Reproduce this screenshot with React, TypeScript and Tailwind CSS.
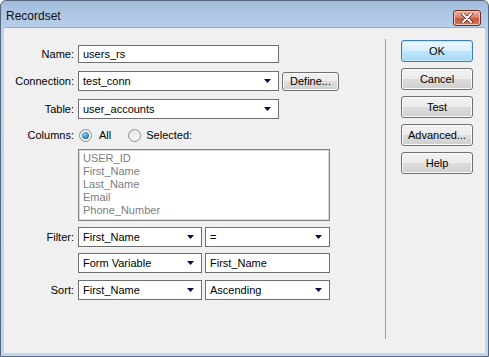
import React from "react";

const btn =
  "flex items-center justify-center rounded-[3px] border border-[#707070] bg-[linear-gradient(#f2f2f2_0%,#ebebeb_50%,#dddddd_50%,#cfcfcf_100%)] shadow-[inset_0_0_0_1px_#fcfcfc]";

function Arrow() {
  return (
    <svg width="7" height="4" viewBox="0 0 7 4" className="shrink-0">
      <polygon points="0,0 7,0 3.5,4" fill="#0b0b4a" />
    </svg>
  );
}

function Select({ value, w }: { value: string; w: string }) {
  return (
    <div
      className={`${w} flex h-[20px] items-center justify-between border border-[#6f6f6f] bg-white pl-[4px] pr-[7px]`}
    >
      <span>{value}</span>
      <Arrow />
    </div>
  );
}

function Field({ value, w }: { value: string; w: string }) {
  return (
    <div className={`${w} flex items-center border border-[#6f6f6f] bg-white pl-[4px]`}>
      {value}
    </div>
  );
}

function Radio({ checked }: { checked?: boolean }) {
  return (
    <div className="flex h-[13px] w-[13px] items-center justify-center rounded-full border border-[#8e8f8f] bg-[linear-gradient(135deg,#e3e3e3,#fbfbfb)]">
      {checked && (
        <div className="h-[7px] w-[7px] rounded-full bg-[radial-gradient(circle_at_40%_35%,#8fd2f7,#2a6fb0_70%,#1b4f8a)]" />
      )}
    </div>
  );
}

function Label({ children }: { children?: React.ReactNode }) {
  return <span className="w-[74px] shrink-0 pr-[4px] text-right">{children}</span>;
}

export default function App() {
  const columns = ["USER_ID", "First_Name", "Last_Name", "Email", "Phone_Number"];

  return (
    <div className="h-[357px] w-[489px] overflow-hidden font-['Liberation_Sans',Arial,sans-serif] text-[11px] text-black">
      <div className="flex h-full flex-col rounded-t-[6px] border border-[#56677d] bg-[linear-gradient(#a2bddc_0px,#b3cbe6_20px,#bfd4ec_40px,#c2d7ee_100%)] px-[3px] pb-[3px]">
        {/* title bar */}
        <div className="flex h-[26px] items-start justify-between pl-[2px] pr-[4px]">
          <span className="mt-[6px] text-[12px] text-[#111]">Recordset</span>
          <div className="mt-[9px] flex h-[16px] w-[28px] items-center justify-center rounded-[3px] border border-[#6b2a1e] bg-[linear-gradient(#eab5a6_0%,#d7806c_45%,#c4563f_55%,#d27a5e_100%)] shadow-[inset_0_0_0_1px_#f2c7ba]">
            <svg width="12" height="10" viewBox="0 0 12 10">
              <path d="M2 1 L10 9 M10 1 L2 9" stroke="#5a2218" strokeWidth="3.4" strokeLinecap="round" />
              <path d="M2 1 L10 9 M10 1 L2 9" stroke="#ffffff" strokeWidth="2" strokeLinecap="round" />
            </svg>
          </div>
        </div>

        {/* client area */}
        <div className="flex flex-1 border-t border-[#98aec8] bg-[#f0f0f0]">
          {/* form */}
          <div className="flex w-[381px] flex-col pt-[17px]">
            <div className="flex h-[18px] items-center">
              <Label>Name:</Label>
              <Field value="users_rs" w="w-[201px] h-[18px]" />
            </div>
            <div className="mt-[8px] flex h-[20px] items-center">
              <Label>Connection:</Label>
              <Select value="test_conn" w="w-[201px]" />
              <div className={`${btn} ml-[3px] h-[19px] w-[57px]`}>Define...</div>
            </div>
            <div className="mt-[8px] flex h-[20px] items-center">
              <Label>Table:</Label>
              <Select value="user_accounts" w="w-[201px]" />
            </div>
            <div className="mt-[8px] flex h-[16px] items-center">
              <Label>Columns:</Label>
              <div className="ml-[1px] flex items-center">
                <Radio checked />
                <span className="ml-[7px]">All</span>
                <div className="ml-[17px]">
                  <Radio />
                </div>
                <span className="ml-[5px]">Selected:</span>
              </div>
            </div>
            <div className="mt-[6px] flex">
              <span className="w-[74px] shrink-0" />
              <div className="h-[72px] w-[252px] border border-[#828282] bg-white shadow-[inset_0_0_0_1px_#d8d8d8] pl-[4px] pt-[2px] leading-[13px] text-[#7d7d7d]">
                {columns.map((c) => (
                  <div key={c}>{c}</div>
                ))}
              </div>
            </div>
            <div className="mt-[6px] flex h-[20px] items-center">
              <Label>Filter:</Label>
              <Select value="First_Name" w="w-[124px]" />
              <div className="ml-[3px]">
                <Select value="=" w="w-[125px]" />
              </div>
            </div>
            <div className="mt-[6px] flex h-[20px] items-center">
              <Label />
              <Select value="Form Variable" w="w-[124px]" />
              <div className="ml-[3px]">
                <Field value="First_Name" w="w-[125px] h-[20px]" />
              </div>
            </div>
            <div className="mt-[7px] flex h-[20px] items-center">
              <Label>Sort:</Label>
              <Select value="First_Name" w="w-[124px]" />
              <div className="ml-[3px]">
                <Select value="Ascending" w="w-[125px]" />
              </div>
            </div>
          </div>

          {/* separator */}
          <div className="mt-[11px] h-[300px] w-px bg-[#a0a0a0]" />

          {/* buttons */}
          <div className="ml-[15px] flex flex-col gap-[6px] pt-[12px]">
            <div className="flex h-[22px] w-[72px] items-center justify-center rounded-[3px] border border-[#3c7fb1] bg-[linear-gradient(#eaf6fd_0%,#d9f0fc_50%,#bee6fd_50%,#a7d9f5_100%)] shadow-[inset_0_0_0_1px_#c3e7fb]">
              OK
            </div>
            <div className={`${btn} h-[22px] w-[72px]`}>Cancel</div>
            <div className={`${btn} h-[22px] w-[72px]`}>Test</div>
            <div className={`${btn} h-[22px] w-[72px]`}>Advanced...</div>
            <div className={`${btn} h-[22px] w-[72px]`}>Help</div>
          </div>
        </div>
      </div>
    </div>
  );
}
